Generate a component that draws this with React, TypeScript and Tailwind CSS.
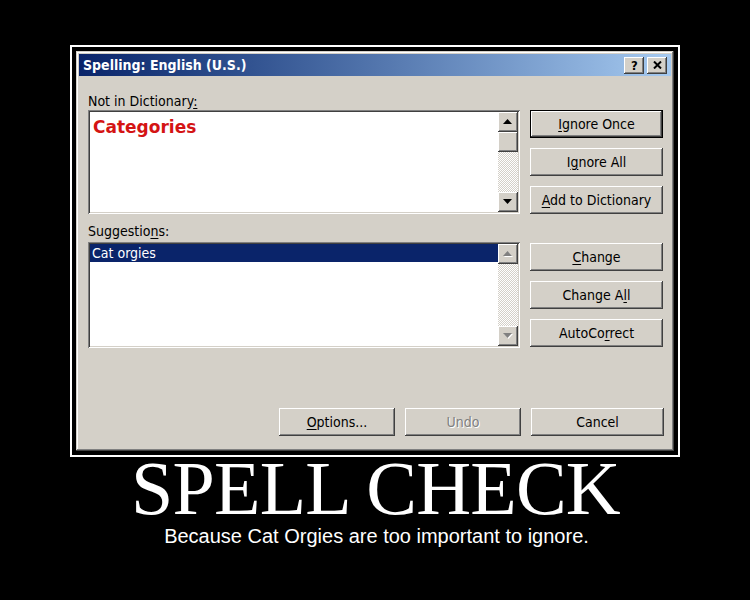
import React from 'react';

const raised =
  'shadow-[inset_-1px_-1px_#404040,inset_1px_1px_#ffffff,inset_-2px_-2px_#808080,inset_2px_2px_#d4d0c8]';
const sunken =
  'shadow-[inset_1px_1px_#808080,inset_-1px_-1px_#ffffff,inset_2px_2px_#404040,inset_-2px_-2px_#d4d0c8]';
const frame =
  'shadow-[inset_-1px_-1px_#404040,inset_1px_1px_#d4d0c8,inset_-2px_-2px_#808080,inset_2px_2px_#ffffff]';
const checker =
  'bg-[image:repeating-conic-gradient(#d4d0c8_0_25%,#ffffff_0_50%)] bg-[length:2px_2px]';

function ScrollArrow({ up, disabled }: { up?: boolean; disabled?: boolean }) {
  return (
    <div className={`w-[20px] h-[20px] shrink-0 bg-[#d4d0c8] ${raised} flex items-center justify-center`}>
      <svg width="10" height="6" viewBox="0 0 10 6">
        {disabled && <path d={up ? 'M1 6h9L5.5 1z' : 'M1 1h9L5.5 6z'} fill="#ffffff" />}
        <path d={up ? 'M0 5h9L4.5 0z' : 'M0 0h9L4.5 5z'} fill={disabled ? '#808080' : '#000000'} />
      </svg>
    </div>
  );
}

function Button({
  children,
  def,
  disabled,
  className = '',
}: {
  children: React.ReactNode;
  def?: boolean;
  disabled?: boolean;
  className?: string;
}) {
  return (
    <div
      className={`h-[28px] shrink-0 bg-[#d4d0c8] ${raised} flex items-center justify-center leading-[16px] ${
        def ? 'border border-black' : ''
      } ${disabled ? 'text-[#808080] [text-shadow:1px_1px_0_#ffffff]' : 'text-black'} ${className}`}
    >
      {children}
    </div>
  );
}

function TitleBtn({ children }: { children: React.ReactNode }) {
  return (
    <div className={`w-[20px] h-[17px] bg-[#d4d0c8] ${raised} flex items-center justify-center`}>
      {children}
    </div>
  );
}

export default function App() {
  return (
    <div className="w-[750px] h-[600px] bg-black flex flex-col items-center pt-[45px] overflow-hidden">
      <div className="w-[610px] border-2 border-white p-[4px]">
        <div
          className={`h-[400px] bg-[#d4d0c8] p-[3px] flex flex-col ${frame} font-['DejaVu_Sans_Condensed','Liberation_Sans',sans-serif] text-[14px] text-black`}
        >
          {/* title bar */}
          <div className="h-[22px] shrink-0 bg-linear-to-r from-[#0a246a] to-[#a6caf0] flex items-center pl-[4px] pr-[4px]">
            <span className="text-white font-bold text-[14px] leading-none">Spelling: English (U.S.)</span>
            <div className="ml-auto flex gap-[3px]">
              <TitleBtn>
                <span className="font-bold text-[13px] leading-none pl-[1px]">?</span>
              </TitleBtn>
              <TitleBtn>
                <svg width="9" height="8" viewBox="0 0 9 8">
                  <path d="M1 0.5L8 7.5M8 0.5L1 7.5" stroke="#000" strokeWidth="2" />
                </svg>
              </TitleBtn>
            </div>
          </div>

          <div className="flex-1 flex flex-col pl-[9px] pr-[7px] pt-[17px] pb-[12px]">
            <div className="leading-[16px]">
              Not in Dictionary<u className="underline-offset-2">:</u>
            </div>
            <div className="flex gap-[10px] mt-[1px]">
              <div className={`w-[432px] h-[104px] bg-white p-[2px] flex ${sunken}`}>
                <div className="flex-1 pl-[3px] pt-[5px]">
                  <span className="font-['DejaVu_Sans',sans-serif] font-bold text-[17px] leading-[20px] text-[#d41414]">
                    Categories
                  </span>
                </div>
                <div className="w-[20px] flex flex-col">
                  <ScrollArrow up />
                  <div className={`h-[20px] shrink-0 bg-[#d4d0c8] ${raised}`} />
                  <div className={`flex-1 ${checker}`} />
                  <ScrollArrow />
                </div>
              </div>
              <div className="w-[133px] flex flex-col gap-[10px]">
                <Button def>
                  <span>
                    <u className="underline-offset-2">I</u>gnore Once
                  </span>
                </Button>
                <Button>
                  <span>
                    I<u className="underline-offset-2">g</u>nore All
                  </span>
                </Button>
                <Button>
                  <span>
                    <u className="underline-offset-2">A</u>dd to Dictionary
                  </span>
                </Button>
              </div>
            </div>

            <div className="leading-[16px] mt-[9px]">
              Suggestio<u className="underline-offset-2">n</u>s:
            </div>
            <div className="flex gap-[10px] mt-[3px] items-start">
              <div className={`w-[432px] h-[106px] bg-white p-[2px] flex ${sunken}`}>
                <div className="flex-1">
                  <div className="h-[18px] bg-[#0a246a] text-white leading-[18px] pl-[2px]">Cat orgies</div>
                </div>
                <div className="w-[20px] flex flex-col">
                  <ScrollArrow up disabled />
                  <div className={`flex-1 ${checker}`} />
                  <ScrollArrow disabled />
                </div>
              </div>
              <div className="w-[133px] flex flex-col gap-[10px] mt-[1px]">
                <Button>
                  <span>
                    <u className="underline-offset-2">C</u>hange
                  </span>
                </Button>
                <Button>
                  <span>
                    Change A<u className="underline-offset-2">l</u>l
                  </span>
                </Button>
                <Button>
                  <span>
                    AutoCo<u className="underline-offset-2">r</u>rect
                  </span>
                </Button>
              </div>
            </div>

            <div className="mt-auto flex justify-end gap-[10px]">
              <Button className="w-[116px]">
                <span>
                  <u className="underline-offset-2">O</u>ptions...
                </span>
              </Button>
              <Button className="w-[116px]" disabled>
                Undo
              </Button>
              <Button className="w-[133px]">Cancel</Button>
            </div>
          </div>
        </div>
      </div>

      <div className="font-['Liberation_Serif',serif] text-white text-[76px] leading-[62px] tracking-[-0.8px] pl-[1px]">
        SPELL CHECK
      </div>
      <div className="font-['Liberation_Sans',sans-serif] text-white text-[20px] leading-[24px] mt-[5px] pl-[3px]">
        Because Cat Orgies are too important to ignore.
      </div>
    </div>
  );
}
